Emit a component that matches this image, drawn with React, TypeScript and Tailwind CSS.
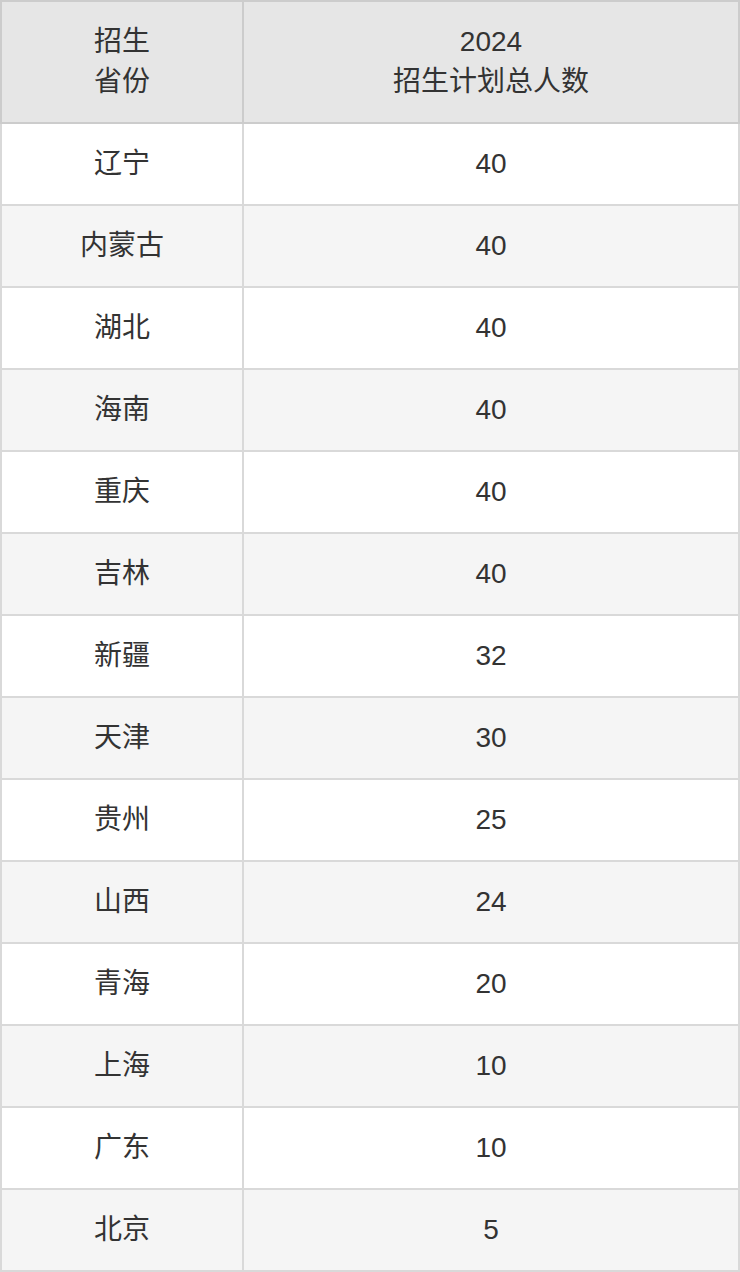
const rows: [string, number][] = [
  ["辽宁", 40],
  ["内蒙古", 40],
  ["湖北", 40],
  ["海南", 40],
  ["重庆", 40],
  ["吉林", 40],
  ["新疆", 32],
  ["天津", 30],
  ["贵州", 25],
  ["山西", 24],
  ["青海", 20],
  ["上海", 10],
  ["广东", 10],
  ["北京", 5],
];

export default function App() {
  return (
    <div className="w-[740px] bg-white font-['Liberation_Sans','Noto_Sans_CJK_SC',sans-serif] text-[28px] text-[#333]">
      <table className="w-full border-collapse text-center">
        <thead>
          <tr className="h-[122px] bg-[#e6e6e6] leading-[40px]">
            <th className="w-[242px] border-2 border-[#cccccc] font-normal">
              招生
              <br />
              省份
            </th>
            <th className="border-2 border-[#cccccc] font-normal">
              2024
              <br />
              招生计划总人数
            </th>
          </tr>
        </thead>
        <tbody>
          {rows.map(([name, count], i) => (
            <tr key={name} className={`h-[82px] ${i % 2 === 0 ? "bg-white" : "bg-[#f5f5f5]"}`}>
              <td className="border-2 border-[#d9d9d9]">{name}</td>
              <td className="border-2 border-[#d9d9d9]">{count}</td>
            </tr>
          ))}
        </tbody>
      </table>
    </div>
  );
}
